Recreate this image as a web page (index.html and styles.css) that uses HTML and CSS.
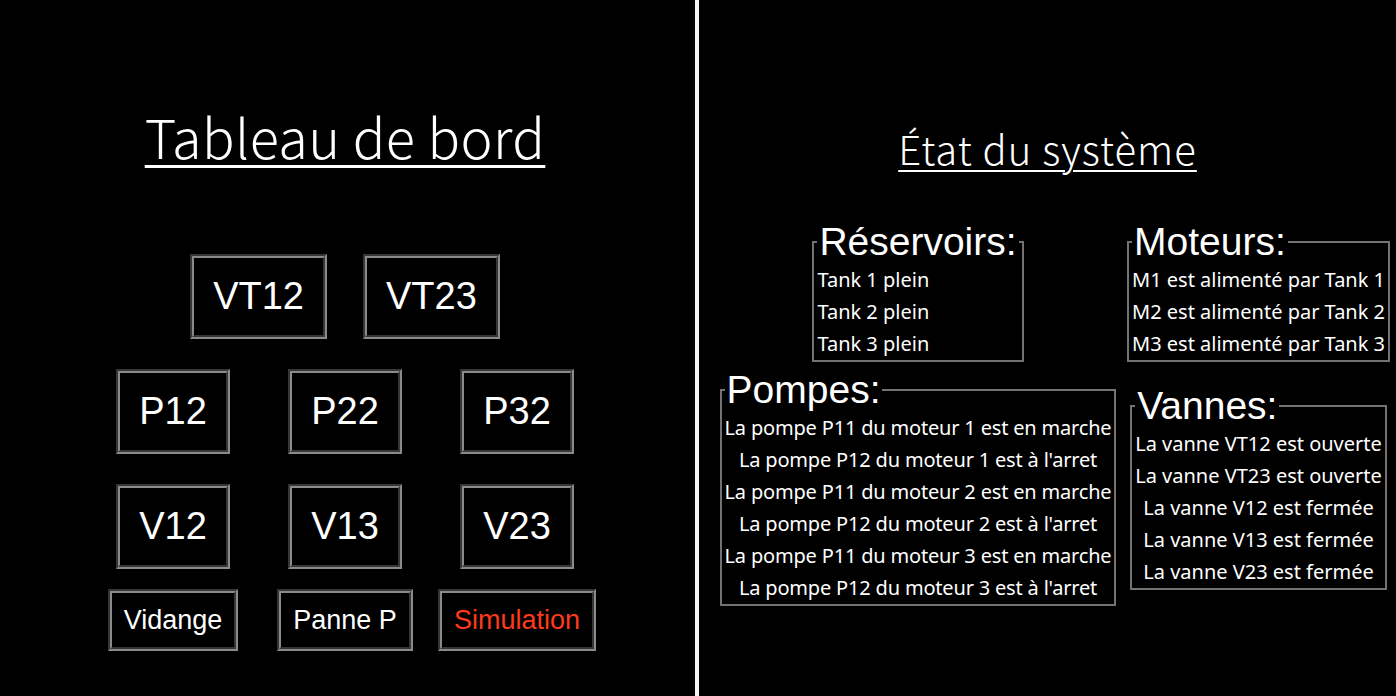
FILE: index.html
```html
<!DOCTYPE html>
<html lang="fr">
<head>
<meta charset="utf-8">
<title>Tableau de bord</title>
<link rel="stylesheet" href="styles.css">
</head>
<body>
<main class="layout">
  <section class="panel panel-left">
    <h1 class="title title-main">Tableau de bord</h1>
    <div class="controls">
      <div class="row-pair">
        <button class="btn btn-large">VT12</button>
        <button class="btn btn-large">VT23</button>
      </div>
      <div class="grid3">
        <button class="btn btn-large">P12</button>
        <button class="btn btn-large">P22</button>
        <button class="btn btn-large">P32</button>
        <button class="btn btn-large">V12</button>
        <button class="btn btn-large">V13</button>
        <button class="btn btn-large">V23</button>
      </div>
      <div class="grid3 grid-actions">
        <button class="btn btn-small">Vidange</button>
        <button class="btn btn-small">Panne P</button>
        <button class="btn btn-small btn-sim">Simulation</button>
      </div>
    </div>
  </section>
  <div class="divider"></div>
  <section class="panel panel-right">
    <h2 class="title title-state">État du système</h2>
    <div class="status-grid">
      <fieldset class="box box-left">
        <legend>Réservoirs:</legend>
        <p>Tank 1 plein</p>
        <p>Tank 2 plein</p>
        <p>Tank 3 plein</p>
      </fieldset>
      <fieldset class="box">
        <legend>Moteurs:</legend>
        <p>M1 est alimenté par Tank 1</p>
        <p>M2 est alimenté par Tank 2</p>
        <p>M3 est alimenté par Tank 3</p>
      </fieldset>
      <fieldset class="box box-pumps">
        <legend>Pompes:</legend>
        <p>La pompe P11 du moteur 1 est en marche</p>
        <p>La pompe P12 du moteur 1 est à l'arret</p>
        <p>La pompe P11 du moteur 2 est en marche</p>
        <p>La pompe P12 du moteur 2 est à l'arret</p>
        <p>La pompe P11 du moteur 3 est en marche</p>
        <p>La pompe P12 du moteur 3 est à l'arret</p>
      </fieldset>
      <fieldset class="box">
        <legend>Vannes:</legend>
        <p>La vanne VT12 est ouverte</p>
        <p>La vanne VT23 est ouverte</p>
        <p>La vanne V12 est fermée</p>
        <p>La vanne V13 est fermée</p>
        <p>La vanne V23 est fermée</p>
      </fieldset>
    </div>
  </section>
</main>
</body>
</html>
```

FILE: styles.css
```css
html, body {
  margin: 0;
  padding: 0;
  background: #000;
  color: #fff;
}

body {
  font-family: "Noto Sans", "Liberation Sans", sans-serif;
}

.layout {
  display: flex;
  width: 1396px;
  height: 696px;
  overflow: hidden;
}

.panel {
  display: flex;
  flex-direction: column;
  align-items: center;
}

.panel-left {
  width: 690px;
  padding-right: 5px;
  flex: none;
}

.divider {
  width: 4px;
  flex: none;
  background: #f4f4f4;
}

.panel-right {
  flex: 1;
}

.title {
  font-family: "Noto Sans CJK JP", "Noto Sans", sans-serif;
  font-weight: 300;
  color: #fff;
  margin: 0;
  text-decoration: underline;
  text-decoration-thickness: 3px;
}

.title-main {
  font-size: 54px;
  line-height: 64px;
  letter-spacing: 0.4px;
  margin-top: 104px;
  text-underline-offset: 6px;
}

.title-state {
  font-size: 40px;
  line-height: 44px;
  letter-spacing: 1px;
  margin-top: 126px;
  text-decoration-thickness: 2px;
  text-underline-offset: 5px;
}

.controls {
  display: flex;
  flex-direction: column;
  align-items: center;
  margin-top: 86px;
}

.row-pair {
  display: flex;
  gap: 36px;
}

.grid3 {
  display: grid;
  grid-template-columns: repeat(3, 172px);
  justify-items: center;
  row-gap: 30px;
  margin-top: 30px;
}

.grid-actions {
  margin-top: 20px;
}

.btn {
  background: #000;
  color: #fff;
  font-family: "Liberation Sans", Arial, sans-serif;
  border: 4px groove #8a8a8a;
  margin: 0;
  cursor: pointer;
}

.btn-large {
  font-size: 38px;
  height: 85px;
  padding: 0 19px;
}

.btn-small {
  font-size: 27px;
  height: 62px;
  padding: 0 12px;
}

.btn-sim {
  color: #ff3a1c;
}

.status-grid {
  display: grid;
  grid-template-columns: 396px auto;
  column-gap: 11px;
  row-gap: 6px;
  align-items: center;
  justify-items: center;
  align-self: flex-start;
  margin-left: 21px;
  margin-top: 50px;
}

.box {
  border: 2px solid #727272;
  margin: 0;
  padding: 0 3px;
  min-width: 0;
  text-align: left;
  font-size: 20px;
}

.box legend {
  font-family: "Liberation Sans", Arial, sans-serif;
  font-size: 39px;
  line-height: 44px;
  padding: 0 2px;
  color: #fff;
}

.box p {
  margin: 0;
  line-height: 32px;
  white-space: nowrap;
  text-align: center;
}

.box-left p {
  text-align: left;
}

.box-pumps p {
  letter-spacing: -0.18px;
}
```
